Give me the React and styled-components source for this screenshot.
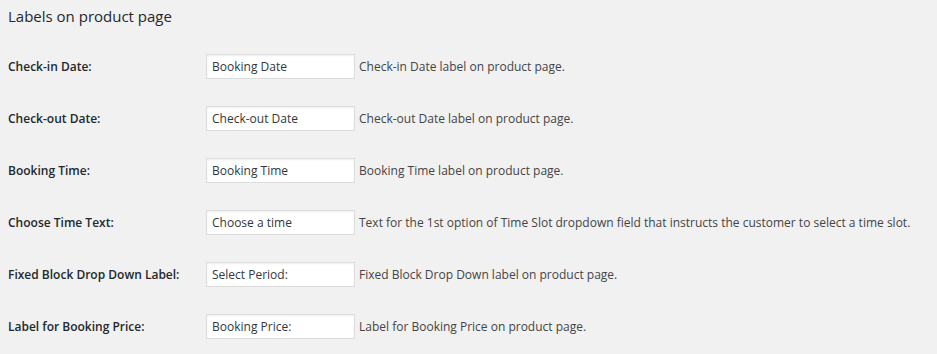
import React from "react";
import styled, { createGlobalStyle } from "styled-components";

const GlobalStyle = createGlobalStyle`
  html, body {
    margin: 0;
    padding: 0;
    background: #f1f1f1;
  }
  body {
    font-family: "Open Sans", "Noto Sans", sans-serif;
    color: #23282d;
  }
`;

const Page = styled.div`
  width: 937px;
  height: 354px;
  padding: 0 8px;
  box-sizing: border-box;
  overflow: hidden;
`;

const Heading = styled.h2`
  margin: 0;
  padding-top: 6px;
  height: 40px;
  box-sizing: border-box;
  font-size: 15px;
  font-weight: 400;
  line-height: 20px;
  color: #23282d;
`;

const Table = styled.div`
  display: flex;
  flex-direction: column;
`;

const Row = styled.div`
  display: grid;
  grid-template-columns: 198px 149px 1fr;
  align-items: center;
  height: 52px;
`;

const Label = styled.label`
  font-size: 12px;
  font-weight: 600;
  color: #23282d;
`;

const Input = styled.input`
  box-sizing: border-box;
  width: 149px;
  height: 25px;
  margin: 0;
  padding: 0 5px;
  border: 1px solid #ddd;
  background: #fff;
  box-shadow: inset 0 1px 2px rgba(0, 0, 0, 0.07);
  font-family: inherit;
  font-size: 12px;
  color: #32373c;
  outline: none;
`;

const Description = styled.span`
  padding-left: 4px;
  font-size: 12px;
  color: #444;
  white-space: nowrap;
`;

const rows = [
  ["Check-in Date:", "Booking Date", "Check-in Date label on product page."],
  ["Check-out Date:", "Check-out Date", "Check-out Date label on product page."],
  ["Booking Time:", "Booking Time", "Booking Time label on product page."],
  [
    "Choose Time Text:",
    "Choose a time",
    "Text for the 1st option of Time Slot dropdown field that instructs the customer to select a time slot.",
  ],
  ["Fixed Block Drop Down Label:", "Select Period:", "Fixed Block Drop Down label on product page."],
  ["Label for Booking Price:", "Booking Price:", "Label for Booking Price on product page."],
];

export default function App() {
  return (
    <Page>
      <GlobalStyle />
      <Heading>Labels on product page</Heading>
      <Table>
        {rows.map(([label, value, desc]) => (
          <Row key={label}>
            <Label>{label}</Label>
            <Input type="text" defaultValue={value} />
            <Description>{desc}</Description>
          </Row>
        ))}
      </Table>
    </Page>
  );
}
